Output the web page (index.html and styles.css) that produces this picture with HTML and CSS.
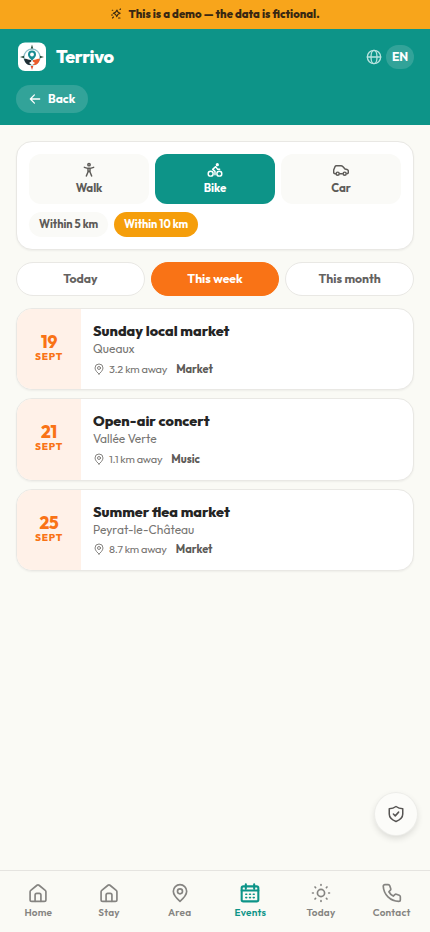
FILE: index.html
```html
<!DOCTYPE html>
<html lang="en">
<head>
<meta charset="utf-8">
<meta name="viewport" content="width=device-width, initial-scale=1">
<title>Terrivo</title>
<link rel="stylesheet" href="styles.css">
</head>
<body>
<svg class="defs" width="0" height="0" aria-hidden="true">
  <symbol id="pin" viewBox="0 0 24 24"><path d="M12 22c-2-1.700-8-7-8-12a8 8 0 0 1 16 0c0 5-6 10.300-8 12Z"/><circle cx="12" cy="10" r="3"/></symbol>
  <symbol id="home" viewBox="0 0 24 24"><path d="M2.500 10.500a2 2 0 0 1 .8-1.600l7.500-6.200a2 2 0 0 1 2.400 0l7.500 6.200a2 2 0 0 1 .8 1.600V20a2 2 0 0 1-2 2h-15a2 2 0 0 1-2-2Z"/><path d="M8.500 22v-7.500a2 2 0 0 1 2-2h3a2 2 0 0 1 2 2V22"/></symbol>
</svg>
<div class="app">
  <div class="banner">
    <svg class="icon spark" viewBox="0 0 24 24"><path d="M14 4c.5 4 2 5.500 6.500 6.500-4.500 1-6 2.500-7 7-1-4.500-2.500-6-7-7C11 9.500 12.500 8 14 4Z"/><path d="M4.500 4.500h1M3 14h2M5 20l2-2M20 3l1-1M17 20h3"/></svg>
    <span>This is a demo — the data is fictional.</span>
  </div>
  <header class="header">
    <div class="brand-row">
      <svg class="logo" viewBox="0 0 32 32">
        <rect x="2" y="1.500" width="28" height="28.500" rx="7" fill="#fff"/>
        <circle cx="16" cy="16" r="8" fill="none" stroke="#8dbec7" stroke-width="1.300"/>
        <path d="m16 3.500-1.200 4h2.400ZM4 16l4-1.200v2.400Zm24 0-4-1.200v2.400Z" fill="#294e3c"/>
        <path d="m16 29-1.300-4h2.600Z" fill="#e34a28"/>
        <path d="M8 18c3-1 4 1 7 1l1 4-2 1c-3 0-5-2-6-6Z" fill="#202e34"/>
        <path d="M24 18c-3-1-4 1-7 1l-1 4 2 1c3 0 5-2 6-6Z" fill="#ec5b2b"/>
        <path d="M16 20c-1-2-4-3.500-4-6.500a4 4 0 0 1 8 0c0 3-3 4.500-4 6.500Z" fill="#168b91"/>
        <circle cx="16" cy="13.500" r="1.900" fill="#fff"/>
        <path d="m13 22 3-2 3 2-3 2Z" fill="#fff"/>
      </svg>
      <span class="brand">Terrivo</span>
      <svg class="icon globe" viewBox="0 0 24 24"><circle cx="12" cy="12" r="10"/><ellipse cx="12" cy="12" rx="4.500" ry="10"/><path d="M2 12h20"/></svg>
      <button class="lang">EN</button>
    </div>
    <button class="back"><svg class="icon" viewBox="0 0 24 24"><path d="M20 12H4m7-7-7 7 7 7"/></svg><span>Back</span></button>
  </header>
  <main class="main">
    <section class="filters">
      <div class="modes">
        <button class="mode"><svg class="icon" viewBox="0 0 24 24"><circle cx="12" cy="4" r="1.800"/><path d="m5 8 5 1.500h4L19 8M10.500 10v5l-2.500 6M13.500 10v5l2.500 6M10.500 15l1.500-1 1.500 1"/></svg><span>Walk</span></button>
        <button class="mode active"><svg class="icon" viewBox="0 0 24 24"><circle cx="5.500" cy="17.500" r="3.700"/><circle cx="18.500" cy="17.500" r="3.700"/><circle cx="15.500" cy="4" r="1.300"/><path d="M12 19v-5l-3.500-3 4.500-4 3 4h3"/></svg><span>Bike</span></button>
        <button class="mode"><svg class="icon car" viewBox="0 0 24 24"><path d="M4 17.500H3a2 2 0 0 1-2-2V12l2-5c.5-1 1-1.500 2-1.500h7c1 0 2 .5 3 1.500l3 3.500 3 .8c1 .3 2 1 2 2.200v2a2 2 0 0 1-2 2M10 17.500h4"/><circle cx="7" cy="17.500" r="2.300"/><circle cx="17.500" cy="17.500" r="2.300"/></svg><span>Car</span></button>
      </div>
      <div class="chips"><button class="chip five">Within 5 km</button><button class="chip ten">Within 10 km</button></div>
    </section>
    <div class="tabs"><button>Today</button><button class="active">This week</button><button>This month</button></div>
    <section class="events">
      <article class="event"><div class="date"><b>19</b><span>SEPT</span></div><div class="info"><h2>Sunday local market</h2><p>Queaux</p><div class="meta"><svg class="icon"><use href="#pin"/></svg><span>3.2 km away</span><strong>Market</strong></div></div></article>
      <article class="event"><div class="date"><b>21</b><span>SEPT</span></div><div class="info"><h2>Open-air concert</h2><p>Vallée Verte</p><div class="meta"><svg class="icon"><use href="#pin"/></svg><span>1.1 km away</span><strong>Music</strong></div></div></article>
      <article class="event"><div class="date"><b>25</b><span>SEPT</span></div><div class="info"><h2>Summer flea market</h2><p>Peyrat-le-Château</p><div class="meta"><svg class="icon"><use href="#pin"/></svg><span>8.7 km away</span><strong>Market</strong></div></div></article>
    </section>
  </main>
  <button class="privacy" aria-label="Privacy"><svg class="icon" viewBox="0 0 24 24"><path d="M12 2c2.500 2 5 3 9 3v7c0 5-4 8-9 10-5-2-9-5-9-10V5c4 0 6.500-1 9-3Z"/><path d="m8.500 12 2.500 2.500 4.500-5"/></svg></button>
  <nav class="nav">
    <a><svg class="icon"><use href="#home"/></svg><span>Home</span></a>
    <a><svg class="icon"><use href="#home"/></svg><span>Stay</span></a>
    <a><svg class="icon"><use href="#pin"/></svg><span>Area</span></a>
    <a class="active"><svg class="icon" viewBox="0 0 24 24"><rect x="2" y="4" width="20" height="18" rx="2"/><path d="M2 9h20M7 1.500v5M17 1.500v5"/><path class="dots" d="M7 13.500h1m3.500 0h1m3.500 0h1M7 17.500h1m3.500 0h1m3.500 0h1"/></svg><span>Events</span></a>
    <a><svg class="icon" viewBox="0 0 24 24"><circle cx="12" cy="12" r="4.300"/><path d="M12 1.800v1M12 21.200v1M1.800 12h1M21.200 12h1M4.800 4.800l.7.700M18.500 18.500l.7.700M4.800 19.200l.7-.7M18.500 5.500l.7-.7"/></svg><span>Today</span></a>
    <a><svg class="icon" viewBox="0 0 24 24"><path d="M3.500 2h4c.8 0 1.500.5 1.800 1.300l1.200 3.500c.2.700 0 1.300-.4 1.800L8.300 10.500a12 12 0 0 0 5.200 5.200l1.900-1.800c.5-.4 1.100-.6 1.800-.4l3.500 1.200c.8.300 1.300 1 1.300 1.800V20a2 2 0 0 1-2 2C10 22 2 14 1.500 4A2 2 0 0 1 3.500 2Z"/></svg><span>Contact</span></a>
  </nav>
</div>
</body>
</html>
```
FILE: styles.css
```css
* { box-sizing: border-box; }
body { margin: 0; background: #fafaf5; color: #242424; font-family: Outfit, Lato, sans-serif; }
button { font: inherit; color: inherit; border: 0; padding: 0; margin: 0; }
h2, p { margin: 0; }
.defs { display: block; height: 0; }
.icon { display: block; flex: none; fill: none; stroke: currentColor; stroke-width: 2; stroke-linecap: round; stroke-linejoin: round; }
.app { min-height: 100vh; display: flex; flex-direction: column; }
.banner { height: 29px; padding-bottom: 1px; background: #f8a51b; color: #382712; display: flex; align-items: center; justify-content: center; gap: 6px; font-size: 11.250px; font-weight: 800; white-space: nowrap; }
.spark { width: 12px; height: 12px; stroke-width: 2.200; }
.header { height: 96px; background: #0d9488; color: #fff; padding: 12px 16px; }
.brand-row { height: 32px; display: flex; align-items: center; }
.logo { width: 32px; height: 32px; }
.brand { flex: 1; margin-left: 8px; font-size: 18px; line-height: 24px; padding-bottom: 1px; font-weight: 800; letter-spacing: -.400px; }
.globe { width: 16px; height: 16px; color: #b9e3df; }
.lang { width: 28px; height: 24px; margin-left: 4px; padding-bottom: 1px; border-radius: 12px; background: #32a399; font-size: 12px; font-weight: 700; }
.back { display: flex; align-items: center; gap: 6px; width: 72px; height: 28px; margin-top: 12px; padding: 0 0 1px 12px; border-radius: 14px; background: #32a399; font-size: 12px; font-weight: 700; letter-spacing: -.050px; }
.back .icon { width: 14px; height: 14px; stroke-width: 2.200; }
.main { flex: 1; padding: 16px; }
.filters { height: 109px; padding: 12px; background: #fff; border: 1px solid #e9e8e4; border-radius: 16px; box-shadow: 0 1px 2px #0000000d; }
.modes { display: grid; grid-template-columns: repeat(3, 1fr); gap: 6px; }
.mode { height: 50px; border-radius: 12px; background: #fafaf7; color: #5d5b58; display: flex; flex-direction: column; align-items: center; justify-content: center; gap: 2px; font-size: 11.500px; line-height: 16px; font-weight: 700; letter-spacing: -.050px; }
.mode .icon { width: 16px; height: 16px; stroke-width: 2.200; }
.mode.active { background: #0d9488; color: #fff; }
.chips { display: flex; gap: 6px; margin-top: 8px; }
.chip { height: 25px; padding-bottom: 1px; border-radius: 13px; font-size: 11px; font-weight: 700; letter-spacing: -.050px; white-space: nowrap; }
.five { width: 79px; background: #fafaf7; color: #5d5b58; }
.ten { width: 84px; background: #f59e0b; color: #fff; }
.tabs { display: grid; grid-template-columns: repeat(3, 1fr); gap: 6px; margin-top: 12px; }
.tabs button { height: 34px; padding-bottom: 2px; border: 1px solid #e9e8e4; border-radius: 17px; background: #fff; color: #64625f; font-size: 12.200px; font-weight: 700; }
.tabs .active { background: #f97316; border-color: #f97316; color: #fff; }
.events { display: flex; flex-direction: column; gap: 8px; margin-top: 12px; }
.event { height: 82.300px; display: flex; overflow: hidden; background: #fff; border: 1px solid #e9e8e4; border-radius: 16px; box-shadow: 0 1px 2px #0000000d; }
.date { width: 64px; flex: none; padding-bottom: 3px; background: #fff1e8; color: #f97316; display: flex; flex-direction: column; align-items: center; justify-content: center; }
.date b { font-size: 17px; line-height: 19px; font-weight: 800; letter-spacing: -.200px; }
.date span { font-size: 10px; line-height: 12px; font-weight: 800; letter-spacing: .700px; }
.info { padding: 12px; white-space: nowrap; }
h2 { font-size: 14.400px; line-height: 20px; font-weight: 800; }
p { font-size: 12px; line-height: 16px; color: #777572; }
.meta { display: flex; align-items: center; height: 15px; margin-top: 4px; color: #777572; font-size: 11px; }
.meta .icon { width: 12px; height: 12px; stroke-width: 1.800; margin-right: 4px; }
.meta span { letter-spacing: -.220px; }
.meta strong { margin-left: 9px; color: #5d5b58; font-weight: 700; }
.privacy { position: fixed; right: 13px; bottom: 97px; width: 42px; height: 42px; display: grid; place-items: center; border-radius: 50%; background: #fcfcf9; color: #575553; box-shadow: 0 0 0 1px #ededE9, 0 3px 7px #00000024; }
.privacy .icon { width: 18px; height: 18px; }
.nav { height: 62px; border-top: 1px solid #e5e4e0; padding: 12px 3px 0; display: grid; grid-template-columns: repeat(6, 1fr); color: #858481; background: #fafaf5; }
.nav a { display: flex; flex-direction: column; align-items: center; gap: 3px; font-size: 10px; line-height: 13px; font-weight: 600; letter-spacing: .200px; }
.nav .icon { width: 20px; height: 20px; }
.nav .active { color: #0d9488; }
.nav .active .icon { stroke-width: 2.500; }
.nav .dots { stroke-width: 2; }
```
